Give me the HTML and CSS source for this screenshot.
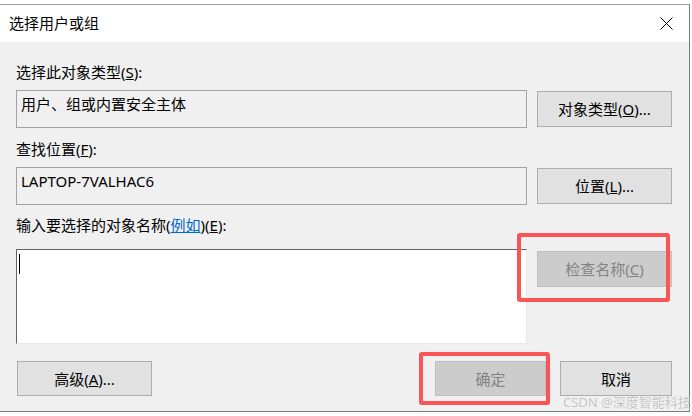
FILE: index.html
```html
<!DOCTYPE html>
<html lang="zh-CN">
<head>
<meta charset="utf-8">
<link rel="stylesheet" href="styles.css">
</head>
<body>
<div class="window">
  <div class="titlebar">
    <span class="title">选择用户或组</span>
    <svg class="close" width="13" height="13" viewBox="0 0 13 13"><path d="M0.5 0.5 L12.5 12.5 M12.5 0.5 L0.5 12.5" stroke="#000" stroke-width="1" fill="none"/></svg>
  </div>
  <div class="content">
    <div class="label first">选择此对象类型(<u>S</u>):</div>
    <div class="row">
      <div class="field">用户、组或内置安全主体</div>
      <div class="btn">对象类型(<u>O</u>)...</div>
    </div>
    <div class="label">查找位置(<u>F</u>):</div>
    <div class="row">
      <div class="field">LAPTOP-7VALHAC6</div>
      <div class="btn">位置(<u>L</u>)...</div>
    </div>
    <div class="label third">输入要选择的对象名称(<span class="link">例如</span>)(<u>E</u>):</div>
    <div class="row top">
      <div class="textarea"><span class="caret"></span></div>
      <div class="btn disabled">检查名称(<u>C</u>)</div>
    </div>
    <div class="bottom">
      <div class="btn adv">高级(<u>A</u>)...</div>
      <div class="spacer"></div>
      <div class="btn disabled small">确定</div>
      <div class="btn small">取消</div>
    </div>
  </div>
  <div class="mark mark1"></div>
  <div class="mark mark2"></div>
  <div class="watermark">CSDN @深度智能科技</div>
</div>
</body>
</html>
```
FILE: styles.css
```css
html, body {
  margin: 0;
  padding: 0;
  background: #ffffff;
}
body {
  font-family: "Noto Sans", "Noto Sans CJK SC", sans-serif;
  font-size: 15px;
  line-height: 20px;
  color: #000;
}
.window {
  position: relative;
  margin-top: 4px;
  width: 689px;
  height: 406px;
  border-top: 1px solid #9a9a9a;
  border-right: 1px solid #7a7a7a;
  border-bottom: 1px solid #7a7a7a;
  background: #f0f0f0;
  display: flex;
  flex-direction: column;
}
.titlebar {
  height: 37px;
  background: #ffffff;
  display: flex;
  align-items: center;
  padding-left: 9px;
  padding-right: 16px;
}
.title {
  flex: 1;
  font-size: 15px;
  margin-top: -1px;
}
.close {
  display: block;
  margin-top: -1px;
}
.content {
  padding: 0 17px 0 16px;
  display: flex;
  flex-direction: column;
}
.label {
  margin-top: 11px;
  height: 20px;
}
.label.first {
  margin-top: 20px;
}
.label.third {
  margin-top: 10px;
}
.link {
  color: #0066cc;
  text-decoration: underline;
}
.row {
  margin-top: 8px;
  display: flex;
  align-items: center;
  gap: 10px;
}
.row.top {
  align-items: flex-start;
  margin-top: 14px;
}
.field {
  width: 511px;
  height: 38px;
  box-sizing: border-box;
  border: 1px solid #a3a3a3;
  padding: 3px 0 0 4px;
  white-space: nowrap;
}
.btn {
  box-sizing: border-box;
  width: 135px;
  height: 36px;
  border: 1px solid #adadad;
  background: #e1e1e1;
  display: flex;
  align-items: center;
  justify-content: center;
  white-space: nowrap;
}
.btn.disabled {
  background: #cccccc;
  border-color: #bfbfbf;
  color: #838383;
}
.row.top .btn {
  margin-top: 2px;
}
.textarea {
  width: 511px;
  height: 95px;
  box-sizing: border-box;
  background: #ffffff;
  border-top: 1px solid #646464;
  border-left: 1px solid #646464;
  border-right: 1px solid #e8e8e8;
  border-bottom: 1px solid #e8e8e8;
  padding: 4px 0 0 2px;
}
.caret {
  display: block;
  width: 1px;
  height: 20px;
  background: #000;
}
.bottom {
  margin-top: 17px;
  display: flex;
  align-items: center;
}
.bottom .btn {
  height: 35px;
}
.btn.adv {
  margin-left: 1px;
}
.spacer {
  flex: 1;
}
.btn.small {
  width: 111px;
}
.btn.small + .btn.small {
  margin-left: 14px;
  width: 112px;
}
.mark {
  position: absolute;
  border: 4px solid #fa5454;
  border-radius: 3px;
  box-sizing: border-box;
}
.mark1 {
  left: 517px;
  top: 228px;
  width: 153px;
  height: 69px;
}
.mark2 {
  left: 419px;
  top: 347px;
  width: 131px;
  height: 53px;
}
.watermark {
  position: absolute;
  left: 563px;
  top: 389px;
  font-size: 13px;
  line-height: 17px;
  color: #c4c4c4;
  text-shadow: 0 0 1px #ffffff;
  white-space: nowrap;
}
```
